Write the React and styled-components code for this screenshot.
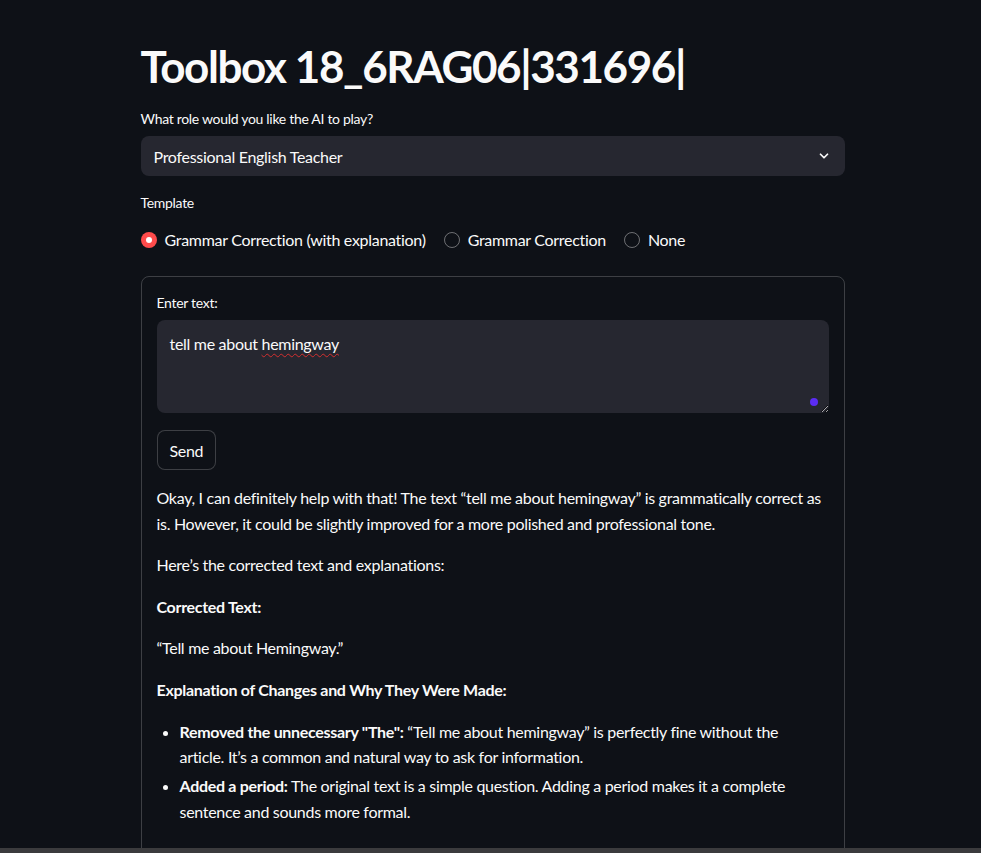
import React, { useState } from "react";
import styled, { createGlobalStyle } from "styled-components";

const GlobalStyle = createGlobalStyle`
  html, body {
    margin: 0;
    padding: 0;
    background: #0e1117;
  }
  body {
    font-family: "Lato", "Noto Sans", sans-serif;
    color: #fafafa;
    letter-spacing: -0.3px;
    overflow: hidden;
  }
`;

const Page = styled.div`
  height: 853px;
  display: flex;
  flex-direction: column;
  background: #0e1117;
`;

const Main = styled.main`
  flex: 1;
  min-height: 0;
  overflow: hidden;
  display: flex;
  justify-content: center;
  align-items: flex-start;
  padding-left: 4px;
`;

const Column = styled.div`
  width: 704px;
  flex-shrink: 0;
  display: flex;
  flex-direction: column;
  padding-top: 38px;
`;

const Title = styled.h1`
  margin: 0 0 15px;
  font-size: 44px;
  font-weight: 700;
  line-height: 56px;
  letter-spacing: -1.4px;
  color: #fafafa;
`;

const Label = styled.div`
  font-size: 14px;
  line-height: 20px;
  margin-bottom: ${({ $mb }) => $mb || 7}px;
  color: #fafafa;
`;

const Select = styled.div`
  height: 40px;
  flex-shrink: 0;
  border-radius: 8px;
  background: #262730;
  display: flex;
  align-items: center;
  justify-content: space-between;
  padding: 0 14px 0 13px;
  font-size: 16px;
  margin-bottom: 17px;
`;

const RadioRow = styled.div`
  display: flex;
  align-items: center;
  gap: 18px;
  margin-bottom: 24px;
`;

const RadioOption = styled.label`
  display: flex;
  align-items: center;
  gap: 8px;
  font-size: 16px;
  line-height: 24px;
  cursor: pointer;
`;

const RadioDot = styled.span`
  width: 16px;
  height: 16px;
  border-radius: 50%;
  box-sizing: border-box;
  display: flex;
  align-items: center;
  justify-content: center;
  background: ${({ $on }) => ($on ? "#ff4b4b" : "transparent")};
  border: ${({ $on }) => ($on ? "none" : "1px solid rgba(250, 250, 250, 0.4)")};

  &::after {
    content: "";
    width: 6px;
    height: 6px;
    border-radius: 50%;
    background: #fff;
    display: ${({ $on }) => ($on ? "block" : "none")};
  }
`;

const Card = styled.div`
  border: 1px solid rgba(250, 250, 250, 0.2);
  border-radius: 8px;
  padding: 16px 15px 60px;
  display: flex;
  flex-direction: column;
`;

const TextAreaWrap = styled.div`
  position: relative;
  height: 93px;
  flex-shrink: 0;
  border-radius: 8px;
  background: #262730;
  margin-bottom: 17px;
`;

const TextArea = styled.textarea`
  display: block;
  width: 100%;
  height: 100%;
  box-sizing: border-box;
  background: transparent;
  border: none;
  outline: none;
  resize: vertical;
  color: #fafafa;
  font-family: inherit;
  font-size: 16px;
  line-height: 24px;
  padding: 12px 13px;
`;

const Underlined = styled.span`
  text-decoration: underline wavy #d32f2f;
  text-decoration-thickness: 1px;
  text-underline-offset: 3px;
`;

const Overlay = styled.div`
  position: absolute;
  top: 12px;
  left: 13px;
  font-size: 16px;
  line-height: 24px;
  pointer-events: none;
`;

const GrammarDot = styled.span`
  position: absolute;
  right: 11px;
  bottom: 7px;
  width: 8px;
  height: 8px;
  border-radius: 50%;
  background: #5b2cf2;
`;

const Button = styled.button`
  align-self: flex-start;
  height: 40px;
  flex-shrink: 0;
  padding: 0 12px;
  border-radius: 8px;
  border: 1px solid rgba(250, 250, 250, 0.2);
  background: #0e1117;
  color: #fafafa;
  font-family: inherit;
  letter-spacing: inherit;
  font-size: 16px;
  margin-bottom: 15px;
  cursor: pointer;
`;

const Para = styled.p`
  margin: 0 0 16px;
  font-size: 16px;
  line-height: 25.6px;
`;

const List = styled.ul`
  margin: 0;
  padding-left: 23px;
`;

const Item = styled.li`
  font-size: 16px;
  line-height: 25.6px;
  margin-bottom: 3.5px;
  padding-right: 6px;
`;

const BottomBar = styled.div`
  height: 5px;
  flex-shrink: 0;
  background: #3b3b3d;
`;

const Chevron = () => (
  <svg width="14" height="14" viewBox="0 0 24 24" fill="none" stroke="#fafafa" strokeWidth="3" strokeLinecap="round" strokeLinejoin="round">
    <path d="M6 9l6 6 6-6" />
  </svg>
);

const options = ["Grammar Correction (with explanation)", "Grammar Correction", "None"];

export default function App() {
  const [choice, setChoice] = useState(0);

  return (
    <Page>
      <GlobalStyle />
      <Main>
        <Column>
          <Title>Toolbox 18_6RAG06|331696|</Title>
          <Label>What role would you like the AI to play?</Label>
          <Select>
            <span>Professional English Teacher</span>
            <Chevron />
          </Select>
          <Label $mb={15}>Template</Label>
          <RadioRow>
            {options.map((o, i) => (
              <RadioOption key={o} onClick={() => setChoice(i)}>
                <RadioDot $on={choice === i} />
                {o}
              </RadioOption>
            ))}
          </RadioRow>
          <Card>
            <Label $mb={7}>Enter text:</Label>
            <TextAreaWrap>
              <Overlay>
                tell me about <Underlined>hemingway</Underlined>
              </Overlay>
              <TextArea readOnly value="" />
              <GrammarDot />
            </TextAreaWrap>
            <Button>Send</Button>
            <Para>
              Okay, I can definitely help with that! The text “tell me about hemingway” is grammatically correct as
              is. However, it could be slightly improved for a more polished and professional tone.
            </Para>
            <Para>Here’s the corrected text and explanations:</Para>
            <Para>
              <strong>Corrected Text:</strong>
            </Para>
            <Para>“Tell me about Hemingway.”</Para>
            <Para>
              <strong>Explanation of Changes and Why They Were Made:</strong>
            </Para>
            <List>
              <Item>
                <strong>Removed the unnecessary "The":</strong> “Tell me about hemingway” is perfectly fine without the
                article. It’s a common and natural way to ask for information.
              </Item>
              <Item>
                <strong>Added a period:</strong> The original text is a simple question. Adding a period makes it a
                complete sentence and sounds more formal.
              </Item>
            </List>
          </Card>
        </Column>
      </Main>
      <BottomBar />
    </Page>
  );
}
